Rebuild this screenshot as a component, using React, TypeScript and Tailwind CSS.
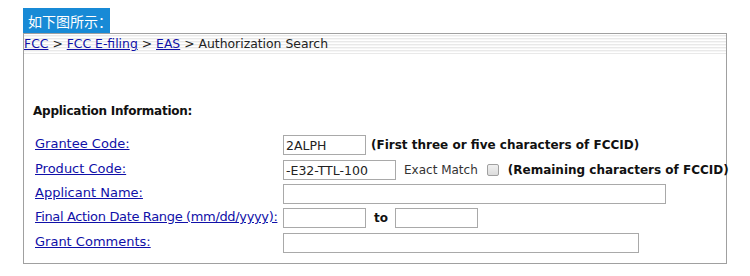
const verdana = "font-['DejaVu_Sans',Verdana,sans-serif]";

function Field({ w, value = "" }: { w: string; value?: string }) {
  return (
    <input
      type="text"
      defaultValue={value}
      className={`h-[20px] ${w} border border-[#a9a9a9] bg-white px-[2px] text-[12.5px] text-[#222] outline-none ${verdana}`}
    />
  );
}

function Label({ children, tight }: { children: React.ReactNode; tight?: boolean }) {
  return (
    <a
      href="#"
      className={`-mt-[2px] whitespace-nowrap text-[13px] leading-[16px] text-[#1010a8] underline ${verdana} ${tight ? "tracking-[-0.35px]" : ""}`}
    >
      {children}
    </a>
  );
}

export default function App() {
  return (
    <div className="min-h-screen bg-white pl-[23px] pt-[8px]">
      <div className="flex h-[25px] w-[87px] items-center whitespace-nowrap bg-[#188ad6] pl-[5px] pt-[1px] text-[14px] text-white font-['Noto_Sans_CJK_SC',sans-serif]">
        如下图所示：
      </div>
      <div className="w-[704px] border border-[#a0a0a0] pb-[10px]">
        <div
          className={`flex h-[20px] items-center whitespace-pre pt-[1px] text-[12.4px] text-[#222] ${verdana} bg-[repeating-linear-gradient(to_bottom,#ffffff_0px,#ffffff_1px,#e9e9e9_1px,#e9e9e9_2px,#f6f6f6_2px,#f6f6f6_3px)]`}
        >
          <a href="#" className="text-[#1010a8] underline">FCC</a>
          <span> &gt; </span>
          <a href="#" className="text-[#1010a8] underline">FCC E-filing</a>
          <span> &gt; </span>
          <a href="#" className="text-[#1010a8] underline">EAS</a>
          <span> &gt; </span>
          <span>Authorization Search</span>
        </div>

        <div className={`mt-[50px] pl-[9px] text-[12px] font-bold leading-[15px] tracking-[-0.25px] text-[#111] ${verdana}`}>
          Application Information:
        </div>

        <div className="mt-[16px] grid grid-cols-[248px_1fr] items-center pl-[11px]">
          <Label>Grantee Code:</Label>
          <div className="flex items-center">
            <Field w="w-[83px]" value="2ALPH" />
            <span className={`ml-[5px] whitespace-nowrap text-[12px] font-bold text-[#111] ${verdana}`}>
              (First three or five characters of FCCID)
            </span>
          </div>

          <div className="col-span-2 h-[5px]" />
          <Label>Product Code:</Label>
          <div className="flex items-center whitespace-nowrap">
            <Field w="w-[113px]" value="-E32-TTL-100" />
            <span className={`ml-[8px] text-[12px] text-[#333] ${verdana}`}>Exact Match</span>
            <span className="ml-[9px] inline-block h-[12px] w-[12px] rounded-[2px] border border-[#a0a0a0] bg-[linear-gradient(#f0f0f0,#dcdcdc)]" />
            <span className={`ml-[9px] text-[12px] font-bold text-[#111] ${verdana}`}>
              (Remaining characters of FCCID)
            </span>
          </div>

          <div className="col-span-2 h-[4px]" />
          <Label>Applicant Name:</Label>
          <div className="flex">
            <Field w="w-[383px]" />
          </div>

          <div className="col-span-2 h-[4px]" />
          <Label tight>Final Action Date Range (mm/dd/yyyy):</Label>
          <div className="flex items-center">
            <Field w="w-[83px]" />
            <span className={`ml-[8px] mr-[7px] text-[12px] font-bold text-[#111] ${verdana}`}>to</span>
            <Field w="w-[83px]" />
          </div>

          <div className="col-span-2 h-[5px]" />
          <Label>Grant Comments:</Label>
          <div className="flex">
            <Field w="w-[356px]" />
          </div>
        </div>
      </div>
    </div>
  );
}
